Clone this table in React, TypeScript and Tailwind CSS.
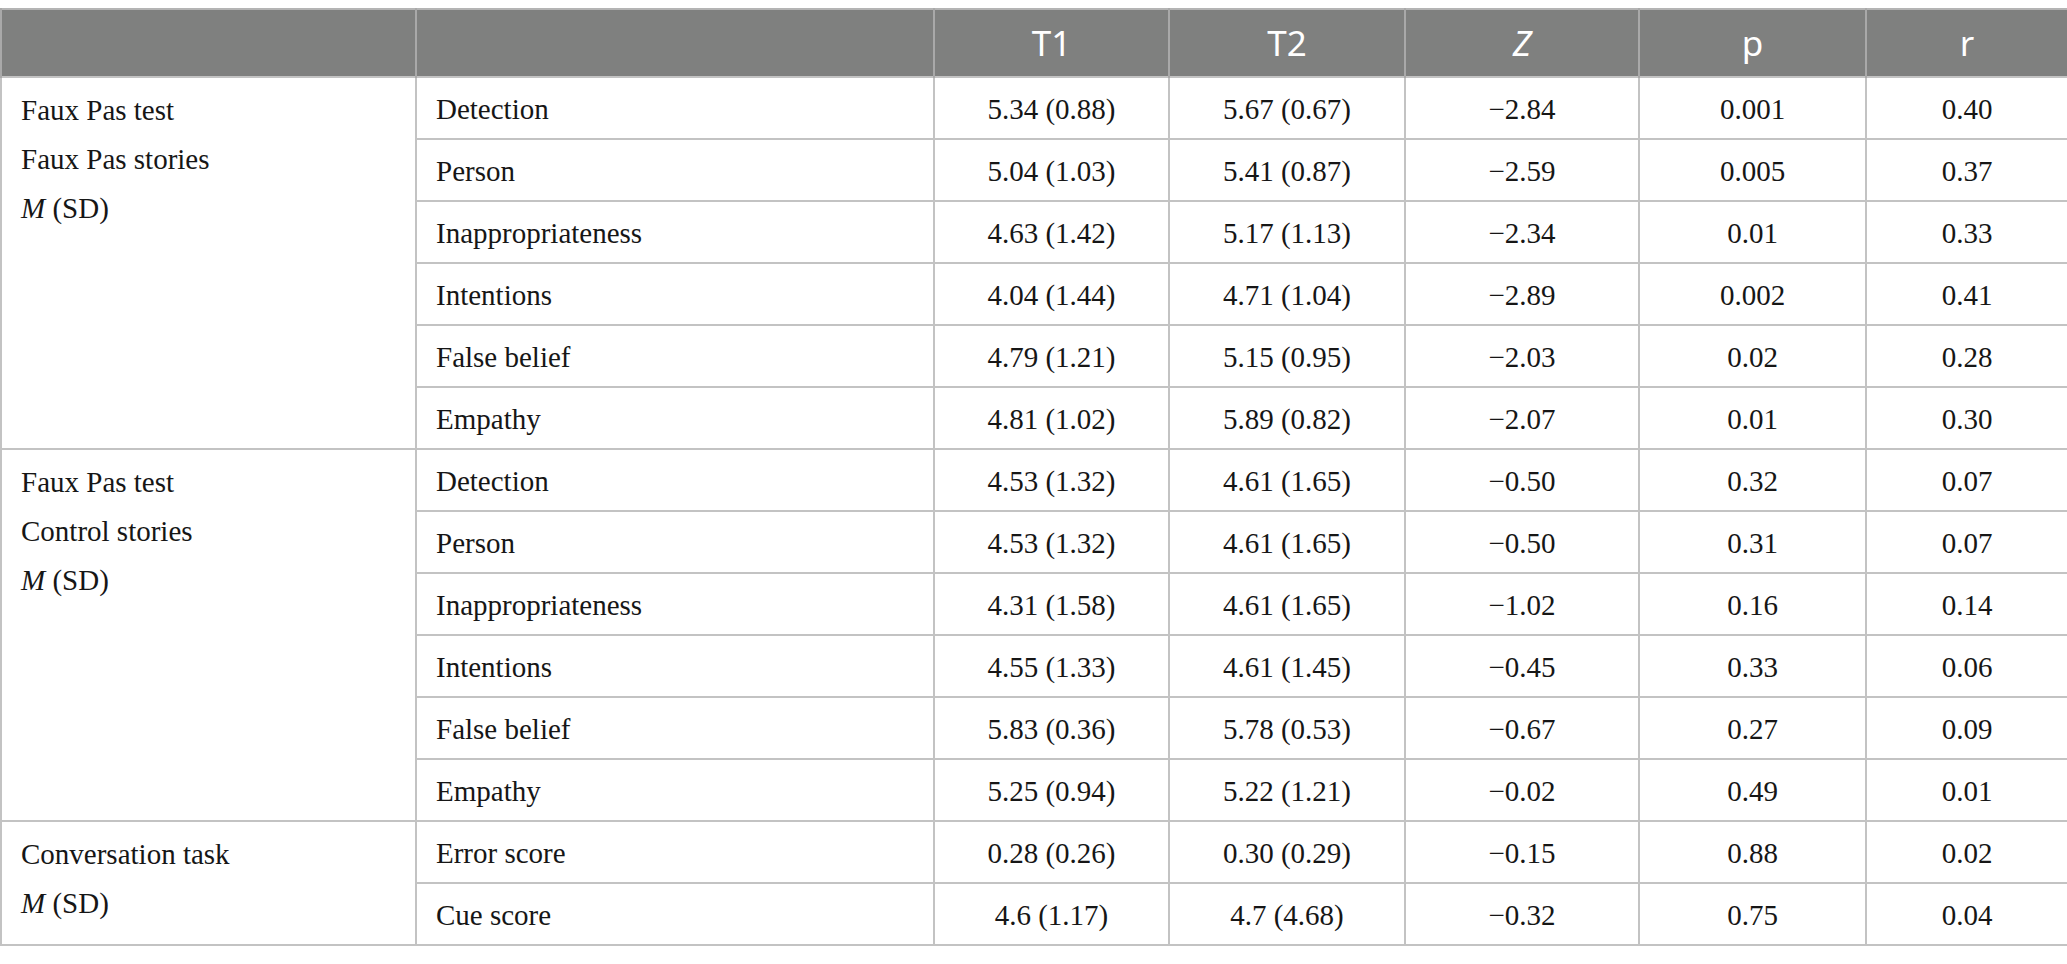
const groups = [
  {
    label: ['Faux Pas test', 'Faux Pas stories'],
    rows: [
      ['Detection', '5.34 (0.88)', '5.67 (0.67)', '−2.84', '0.001', '0.40'],
      ['Person', '5.04 (1.03)', '5.41 (0.87)', '−2.59', '0.005', '0.37'],
      ['Inappropriateness', '4.63 (1.42)', '5.17 (1.13)', '−2.34', '0.01', '0.33'],
      ['Intentions', '4.04 (1.44)', '4.71 (1.04)', '−2.89', '0.002', '0.41'],
      ['False belief', '4.79 (1.21)', '5.15 (0.95)', '−2.03', '0.02', '0.28'],
      ['Empathy', '4.81 (1.02)', '5.89 (0.82)', '−2.07', '0.01', '0.30'],
    ],
  },
  {
    label: ['Faux Pas test', 'Control stories'],
    rows: [
      ['Detection', '4.53 (1.32)', '4.61 (1.65)', '−0.50', '0.32', '0.07'],
      ['Person', '4.53 (1.32)', '4.61 (1.65)', '−0.50', '0.31', '0.07'],
      ['Inappropriateness', '4.31 (1.58)', '4.61 (1.65)', '−1.02', '0.16', '0.14'],
      ['Intentions', '4.55 (1.33)', '4.61 (1.45)', '−0.45', '0.33', '0.06'],
      ['False belief', '5.83 (0.36)', '5.78 (0.53)', '−0.67', '0.27', '0.09'],
      ['Empathy', '5.25 (0.94)', '5.22 (1.21)', '−0.02', '0.49', '0.01'],
    ],
  },
  {
    label: ['Conversation task'],
    rows: [
      ['Error score', '0.28 (0.26)', '0.30 (0.29)', '−0.15', '0.88', '0.02'],
      ['Cue score', '4.6 (1.17)', '4.7 (4.68)', '−0.32', '0.75', '0.04'],
    ],
  },
]

const headCell =
  'border-x-2 border-[#a9a9a9] text-center align-middle font-normal text-white'

const cell = 'border-2 border-[#c3c3c3] pt-[4px] align-middle'

export default function App() {
  return (
    <div className="min-h-screen bg-white pt-[8px] text-[#161616] [font-family:'Liberation_Serif',serif]">
      <table className="w-[2067px] table-fixed border-collapse border-2 border-[#b4b4b4] text-[29px]">
        <colgroup>
          <col className="w-[415px]" />
          <col className="w-[518px]" />
          <col className="w-[235px]" />
          <col className="w-[236px]" />
          <col className="w-[234px]" />
          <col className="w-[227px]" />
          <col className="w-[202px]" />
        </colgroup>
        <thead>
          <tr className="h-[68px] bg-[#7f807f] text-[35px] [font-family:'Noto_Sans',sans-serif]">
            <th className={headCell}></th>
            <th className={headCell}></th>
            <th className={headCell}>T1</th>
            <th className={headCell}>T2</th>
            <th className={headCell}>
              <i>Z</i>
            </th>
            <th className={headCell}>p</th>
            <th className={headCell}>r</th>
          </tr>
        </thead>
        <tbody>
          {groups.map((g) =>
            g.rows.map((r, i) => (
              <tr key={g.label.join() + r[0]} className="h-[62px]">
                {i === 0 && (
                  <td
                    rowSpan={g.rows.length}
                    className="border-2 border-[#c3c3c3] px-[19px] pt-[8px] align-top leading-[49px]"
                  >
                    {g.label.map((l) => (
                      <div key={l}>{l}</div>
                    ))}
                    <div>
                      <i>M</i> (SD)
                    </div>
                  </td>
                )}
                <td className={`${cell} px-[19px]`}>{r[0]}</td>
                {r.slice(1).map((v, j) => (
                  <td key={j} className={`${cell} text-center`}>
                    {v}
                  </td>
                ))}
              </tr>
            ))
          )}
        </tbody>
      </table>
    </div>
  )
}
